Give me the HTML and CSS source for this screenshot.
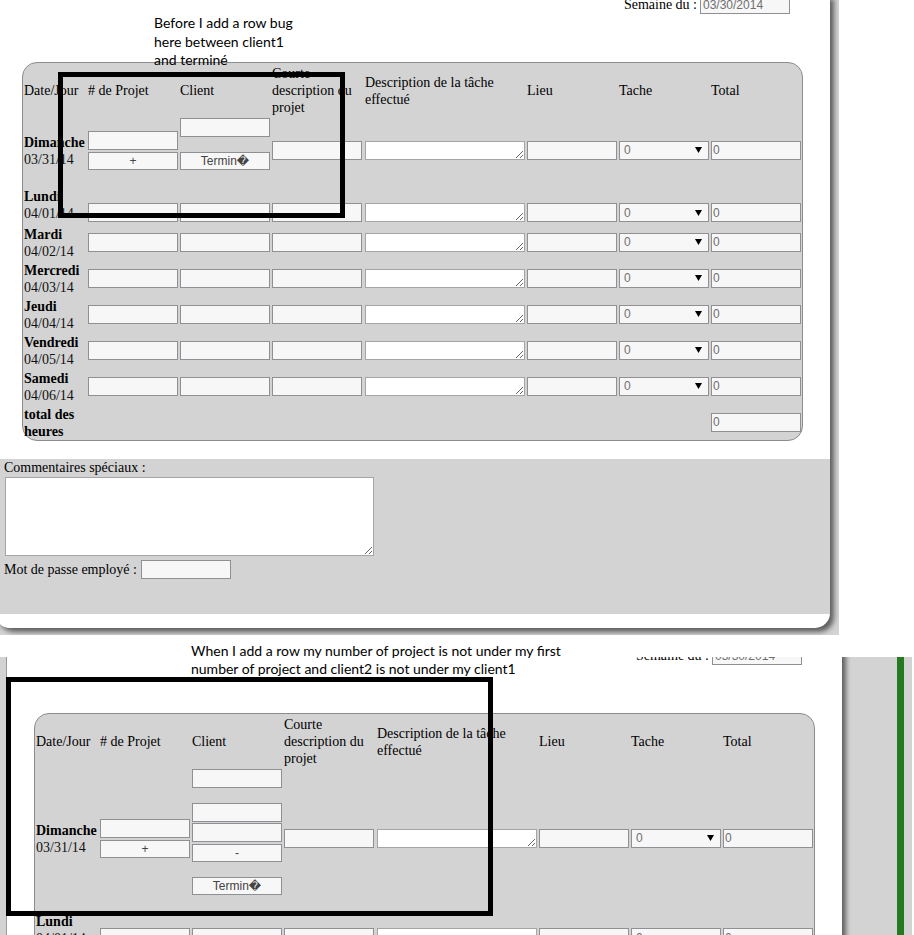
FILE: index.html
```html
<!DOCTYPE html>
<html lang="fr">
<head>
<meta charset="utf-8">
<title>Feuille de temps</title>
<link rel="stylesheet" href="styles.css">
</head>
<body>
<div class="canvas">

  <section class="shot shot-before">
    <div class="page">
      <div class="week"><span>Semaine du :</span><input class="field date" value="03/30/2014"></div>
      <div class="panel">
        <div class="row head">
          <div>Date/Jour</div><div># de Projet</div><div>Client</div><div>Courte description du projet</div><div>Description de la tâche effectué</div><div>Lieu</div><div>Tache</div><div>Total</div>
        </div>
        <div class="row first">
          <div class="day"><b>Dimanche</b><br>03/31/14</div>
          <div class="stack"><input class="field"><button class="btn plus">+</button></div>
          <div class="client"><input class="field"><button class="btn gap">Termin�</button></div>
          <input class="field"><textarea class="area"></textarea><input class="field">
          <div class="sel"><span>0</span><svg width="7" height="6" viewBox="0 0 7 6"><path d="M0 0H7L3.5 6Z"/></svg></div>
          <input class="field num" value="0">
        </div>
        <div class="row r-lundi">
          <div class="day"><b>Lundi</b><br>04/01/14</div>
          <input class="field"><input class="field"><input class="field"><textarea class="area"></textarea><input class="field">
          <div class="sel"><span>0</span><svg width="7" height="6" viewBox="0 0 7 6"><path d="M0 0H7L3.5 6Z"/></svg></div>
          <input class="field num" value="0">
        </div>
        <div class="row day-row">
          <div class="day"><b>Mardi</b><br>04/02/14</div>
          <input class="field"><input class="field"><input class="field"><textarea class="area"></textarea><input class="field">
          <div class="sel"><span>0</span><svg width="7" height="6" viewBox="0 0 7 6"><path d="M0 0H7L3.5 6Z"/></svg></div>
          <input class="field num" value="0">
        </div>
        <div class="row day-row">
          <div class="day"><b>Mercredi</b><br>04/03/14</div>
          <input class="field"><input class="field"><input class="field"><textarea class="area"></textarea><input class="field">
          <div class="sel"><span>0</span><svg width="7" height="6" viewBox="0 0 7 6"><path d="M0 0H7L3.5 6Z"/></svg></div>
          <input class="field num" value="0">
        </div>
        <div class="row day-row">
          <div class="day"><b>Jeudi</b><br>04/04/14</div>
          <input class="field"><input class="field"><input class="field"><textarea class="area"></textarea><input class="field">
          <div class="sel"><span>0</span><svg width="7" height="6" viewBox="0 0 7 6"><path d="M0 0H7L3.5 6Z"/></svg></div>
          <input class="field num" value="0">
        </div>
        <div class="row day-row">
          <div class="day"><b>Vendredi</b><br>04/05/14</div>
          <input class="field"><input class="field"><input class="field"><textarea class="area"></textarea><input class="field">
          <div class="sel"><span>0</span><svg width="7" height="6" viewBox="0 0 7 6"><path d="M0 0H7L3.5 6Z"/></svg></div>
          <input class="field num" value="0">
        </div>
        <div class="row day-row">
          <div class="day"><b>Samedi</b><br>04/06/14</div>
          <input class="field"><input class="field"><input class="field"><textarea class="area"></textarea><input class="field">
          <div class="sel"><span>0</span><svg width="7" height="6" viewBox="0 0 7 6"><path d="M0 0H7L3.5 6Z"/></svg></div>
          <input class="field num" value="0">
        </div>
        <div class="row day-row">
          <div class="total-label">total des heures</div>
          <input class="field num total-cell" value="0">
        </div>
      </div>
      <div class="notes">
        <div>Commentaires spéciaux :</div>
        <textarea class="comment"></textarea>
        <div class="pass"><span>Mot de passe employé :</span><input class="field" type="password"></div>
      </div>
    </div>
  </section>

  <section class="shot shot-after">
    <div class="page">
      <div class="week"><span>Semaine du :</span><input class="field date" value="03/30/2014"></div>
      <div class="panel">
        <div class="row head">
          <div>Date/Jour</div><div># de Projet</div><div>Client</div><div>Courte description du projet</div><div>Description de la tâche effectué</div><div>Lieu</div><div>Tache</div><div>Total</div>
        </div>
        <div class="row first">
          <div class="day"><b>Dimanche</b><br>03/31/14</div>
          <div class="stack"><input class="field"><button class="btn plus">+</button></div>
          <div class="client">
            <input class="field">
            <input class="field gap">
            <input class="field tight">
            <button class="btn minus">-</button>
            <button class="btn gap">Termin�</button>
          </div>
          <input class="field"><textarea class="area"></textarea><input class="field">
          <div class="sel"><span>0</span><svg width="7" height="6" viewBox="0 0 7 6"><path d="M0 0H7L3.5 6Z"/></svg></div>
          <input class="field num" value="0">
        </div>
        <div class="row r-lundi">
          <div class="day"><b>Lundi</b><br>04/01/14</div>
          <input class="field"><input class="field"><input class="field"><textarea class="area"></textarea><input class="field">
          <div class="sel"><span>0</span><svg width="7" height="6" viewBox="0 0 7 6"><path d="M0 0H7L3.5 6Z"/></svg></div>
          <input class="field num" value="0">
        </div>
        <div class="row day-row">
          <div class="day"><b>Mardi</b><br>04/02/14</div>
          <input class="field"><input class="field"><input class="field"><textarea class="area"></textarea><input class="field">
          <div class="sel"><span>0</span><svg width="7" height="6" viewBox="0 0 7 6"><path d="M0 0H7L3.5 6Z"/></svg></div>
          <input class="field num" value="0">
        </div>
      </div>
    </div>
    <div class="rail"></div>
    <div class="tail"></div>
  </section>

  <p class="note note-top">Before I add a row bug<br>here between client1<br>and terminé</p>
  <p class="note note-bottom">When I add a row my number of project is not under my first<br>number of project and client2 is not under my client1</p>
  <div class="mark mark-top"></div>
  <div class="mark mark-bottom"></div>
</div>
</body>
</html>
```

FILE: styles.css
```css
* { box-sizing: border-box; }

body {
  margin: 0;
  background: #fff;
  font-family: "Liberation Serif", "Times New Roman", serif;
}

.canvas {
  position: relative;
  width: 914px;
  height: 935px;
  overflow: hidden;
  background: #fff;
}

.shot {
  overflow: hidden;
  background: #d3d3d3;
}

.shot-before {
  width: 839px;
  height: 635px;
}

.shot-after {
  display: flex;
  align-items: flex-start;
  height: 278px;
  margin-top: 22px;
}

.page {
  flex: none;
  width: 835px;
  background: #fff;
  border-radius: 0 0 15px 15px;
  box-shadow: -1px 0 0 #9a9a9a, 4px 4px 5px rgba(0, 0, 0, 0.55);
  font-size: 14px;
  line-height: 17px;
  color: #000;
  padding-bottom: 14px;
}

.shot-before .page { margin: -5px 0 0 -5px; }
.shot-after .page { margin: -11px 0 0 7px; }

.week {
  display: flex;
  justify-content: flex-end;
  align-items: center;
  gap: 3px;
  height: 19px;
  padding-right: 40px;
}

.panel {
  margin: 48px 0 0 27px;
  width: 781px;
  background: #d3d3d3;
  border: 1px solid #8c8c8c;
  border-radius: 15px;
  padding: 0 1px 2px;
  display: flex;
  flex-direction: column;
  gap: 2px;
}

.row {
  display: grid;
  grid-template-columns: 62px 90px 90px 91px 160px 90px 90px 90px;
  column-gap: 2px;
  align-items: center;
}

.head { height: 51px; }
.head > div { padding-top: 2px; }
.day-row { height: 34px; }
.r-lundi { height: 36px; }
.r-lundi > .day { align-self: start; }
.r-lundi > :not(.day) { align-self: end; }

.day { white-space: nowrap; color: #111; padding-top: 2px; }
.day b { color: #000; }
.total-label { font-weight: bold; padding-top: 2px; }
.total-cell { grid-column: 8; }

.field {
  display: block;
  width: 90px;
  height: 19px;
  margin: 0;
  padding: 0 2px;
  border: 1px solid #8e9094;
  border-radius: 0;
  background: #f7f7f7;
  font: 12px "Liberation Sans", Arial, sans-serif;
  color: #6f6f6f;
  outline: none;
}

.num { padding-left: 1px; }

.area {
  display: block;
  width: 160px;
  height: 19px;
  margin: 0;
  padding: 0;
  border: 1px solid #a5a5a5;
  background: #fff;
  font: 12px "Liberation Sans", Arial, sans-serif;
  resize: both;
}

.btn {
  display: block;
  width: 90px;
  height: 18px;
  margin: 0;
  padding: 0;
  border: 1px solid #8e9094;
  border-radius: 0;
  background: #f7f7f7;
  font: 12px/16px "Liberation Sans", "DejaVu Sans", Arial, sans-serif;
  color: #444;
}

.stack { display: flex; flex-direction: column; }
.stack .plus { margin-top: 2px; }

.client {
  align-self: start;
  display: flex;
  flex-direction: column;
  padding: 2px 0 14px;
}
.client .gap { margin-top: 15px; }
.client .tight { margin-top: 1px; }
.client .minus { margin-top: 2px; }

.sel {
  display: flex;
  align-items: center;
  justify-content: space-between;
  width: 90px;
  height: 19px;
  border: 1px solid #8e9094;
  background: #f7f7f7;
  padding: 0 6px 0 4px;
  font: 12px "Liberation Sans", Arial, sans-serif;
  color: #6f6f6f;
}
.sel svg { fill: #000; }

.notes {
  margin-top: 18px;
  height: 155px;
  background: #d3d3d3;
  padding-left: 9px;
}

.comment {
  display: block;
  margin: 1px 0 0 1px;
  width: 369px;
  height: 79px;
  padding: 0;
  border: 1px solid #a5a5a5;
  background: #fff;
}

.pass {
  display: flex;
  align-items: center;
  gap: 4px;
  margin-top: 3px;
  height: 21px;
}

.rail {
  align-self: stretch;
  flex: none;
  width: 7px;
  margin-left: 55px;
  background: #257a21;
}

.tail {
  align-self: stretch;
  flex: none;
  width: 2px;
  margin-left: 8px;
  background: #fff;
}

.note {
  position: absolute;
  margin: 0;
  font: 14px/18.5px Lato, "Open Sans", sans-serif;
  color: #000;
  white-space: nowrap;
}
.note-top { left: 154px; top: 14px; }
.note-bottom { left: 191px; top: 642px; line-height: 17.5px; }

.mark {
  position: absolute;
  border: 5px solid #000;
}
.mark-top { left: 58px; top: 72px; width: 287px; height: 146px; }
.mark-bottom { left: 6px; top: 677px; width: 487px; height: 239px; }
```
